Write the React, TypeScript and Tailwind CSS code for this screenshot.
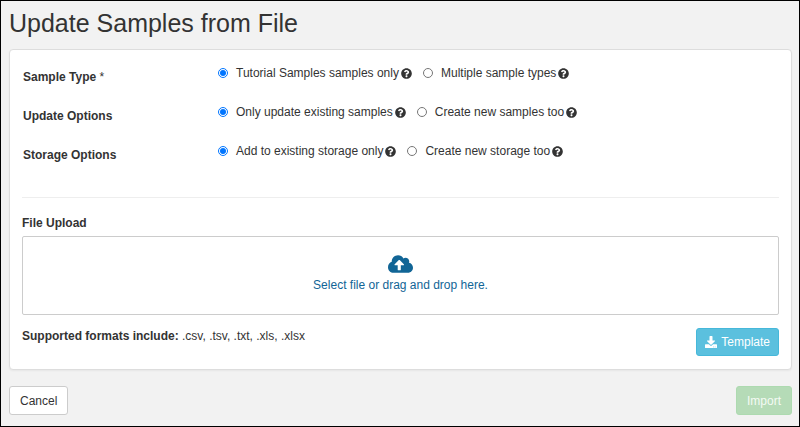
import { useState } from 'react';
import { FaCloudUploadAlt, FaDownload, FaQuestionCircle } from 'react-icons/fa';

interface OptionRow {
  name: string;
  label: string;
  required?: boolean;
  choices: string[];
}

const OPTION_ROWS: OptionRow[] = [
  {
    name: 'sampleType',
    label: 'Sample Type',
    required: true,
    choices: ['Tutorial Samples samples only', 'Multiple sample types'],
  },
  {
    name: 'updateOptions',
    label: 'Update Options',
    choices: ['Only update existing samples', 'Create new samples too'],
  },
  {
    name: 'storageOptions',
    label: 'Storage Options',
    choices: ['Add to existing storage only', 'Create new storage too'],
  },
];

export default function App() {
  return (
    <div className="min-h-screen border border-black bg-[#f2f2f2] pr-[7px] pb-2 pl-2 font-['Liberation_Sans',Arial,sans-serif] text-xs text-[#333]">
      <h1 className="pt-1 text-[25px] leading-9">Update Samples from File</h1>

      <main className="mt-2 rounded border border-[#ddd] bg-white px-3 pt-[15px] pb-[13px] shadow-xs">
        <div className="border-b border-[#eee] pb-[15px]">
          {OPTION_ROWS.map((row) => (
            <RadioRow key={row.name} row={row} />
          ))}
        </div>

        <section className="pt-[15px]">
          <label htmlFor="file" className="block pb-[3px] leading-5 font-bold">
            File Upload
          </label>
          <label
            htmlFor="file"
            className="relative flex cursor-pointer flex-col items-center rounded-xs border border-[#ccc] pt-4 pb-[21px] text-[#116596]"
          >
            <FaCloudUploadAlt className="mb-0.5 h-[22px] w-[25px]" aria-hidden="true" />
            <span className="leading-4">Select file or drag and drop here.</span>
            <input id="file" type="file" className="sr-only" />
          </label>
          <div className="mt-[13px] flex items-start justify-between">
            <p className="leading-4">
              <strong>Supported formats include:</strong> .csv, .tsv, .txt, .xls, .xlsx
            </p>
            <button
              type="button"
              className="flex h-7 items-center gap-1 rounded-[3px] border border-[#46b8da] bg-[#5bc0de] px-2 text-white"
            >
              <FaDownload className="size-3" aria-hidden="true" />
              Template
            </button>
          </div>
        </section>
      </main>

      <footer className="mt-4 flex justify-between">
        <button type="button" className="h-[29px] rounded-[3px] border border-[#ccc] bg-white px-2.5">
          Cancel
        </button>
        <button
          type="button"
          disabled
          className="h-[29px] rounded-[3px] border border-[#addab0] bg-[#b5dbb7] px-2.5 text-[#f4faf4]"
        >
          Import
        </button>
      </footer>
    </div>
  );
}

function RadioRow({ row }: { row: OptionRow }) {
  const [selected, setSelected] = useState(row.choices[0]);

  return (
    <fieldset className="flex h-[39px] items-start">
      <legend className="float-left w-[196px] pt-0.5 pl-px leading-5 font-bold">
        {row.label}
        {row.required && <span className="font-normal"> *</span>}
      </legend>
      <div className="flex gap-[11px]">
        {row.choices.map((choice) => (
          <div key={choice} className="flex items-center gap-0.5">
            <label className="flex items-center gap-2 leading-4">
              <input
                type="radio"
                name={row.name}
                className="size-2.5"
                checked={selected === choice}
                onChange={() => setSelected(choice)}
              />
              {choice}
            </label>
            <FaQuestionCircle className="size-[11px]" aria-hidden="true" />
          </div>
        ))}
      </div>
    </fieldset>
  );
}
